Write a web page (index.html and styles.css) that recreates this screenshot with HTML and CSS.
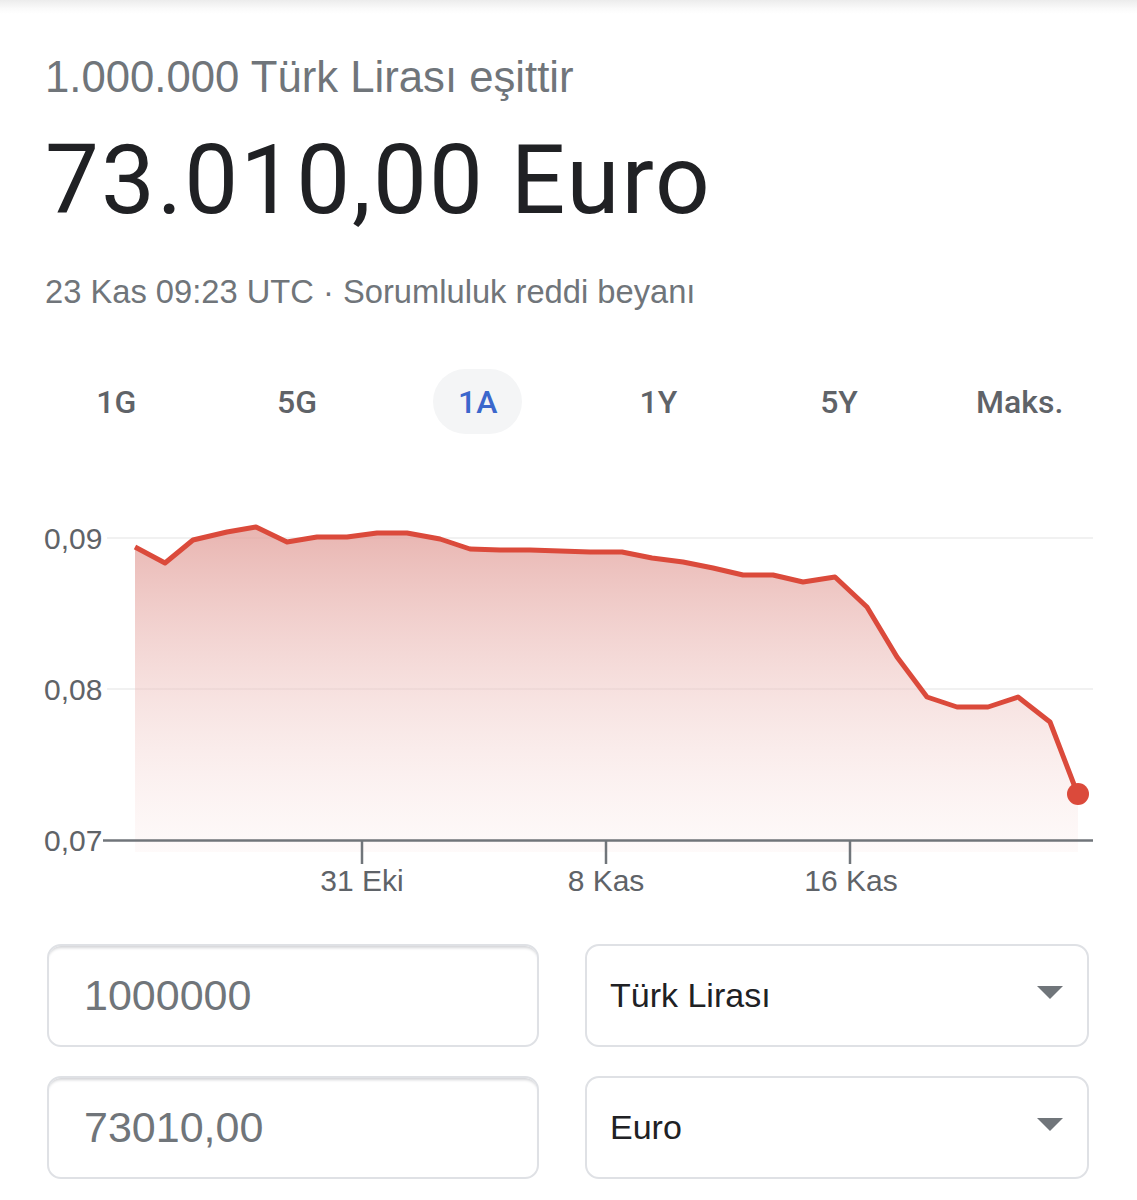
FILE: index.html
```html
<!DOCTYPE html>
<html lang="tr">
<head>
<meta charset="utf-8">
<title>Döviz çevirici</title>
<link rel="stylesheet" href="styles.css">
</head>
<body>
<div class="topbar"></div>
<main class="card">
  <div class="head">
    <div class="subtitle">1.000.000 Türk Lirası eşittir</div>
    <div class="result">73.010,00 Euro</div>
    <div class="meta">23 Kas 09:23 UTC · Sorumluluk reddi beyanı</div>
  </div>
  <nav class="tabs">
    <div class="tab"><span>1G</span></div>
    <div class="tab"><span>5G</span></div>
    <div class="tab"><span class="active">1A</span></div>
    <div class="tab"><span>1Y</span></div>
    <div class="tab"><span>5Y</span></div>
    <div class="tab"><span>Maks.</span></div>
  </nav>
  <div class="chart">
    <svg width="1137" height="420" viewBox="0 490 1137 420" xmlns="http://www.w3.org/2000/svg">
      <defs>
        <linearGradient id="fill" x1="0" y1="0" x2="0" y2="1">
          <stop offset="0" stop-color="#e3a29d" stop-opacity="0.8"/>
          <stop offset="1" stop-color="#f7dcda" stop-opacity="0.15"/>
        </linearGradient>
      </defs>
      <line x1="107" y1="538" x2="1093" y2="538" stroke="#f1f1f1" stroke-width="2"/>
      <line x1="107" y1="689" x2="1093" y2="689" stroke="#f1f1f1" stroke-width="2"/>
      <path d="M135,547 L165,563 L193,540 L227,532 L256,527 L287,542 L317,537 L347,537 L377,533 L407,533 L440,539 L470,549 L500,550 L530,550 L560,551 L590,552 L622,552 L652,558 L683,562 L713,568 L743,575 L773,575 L803,582 L835,577 L867,607 L897,657 L927,697 L957,707 L988,707 L1018,697 L1050,722 L1078,795 L1078,852 L135,852 Z" fill="url(#fill)"/>
      <line x1="103" y1="840.5" x2="1093" y2="840.5" stroke="#70757a" stroke-width="2.5"/>
      <line x1="362" y1="840" x2="362" y2="864" stroke="#70757a" stroke-width="2.5"/>
      <line x1="606" y1="840" x2="606" y2="864" stroke="#70757a" stroke-width="2.5"/>
      <line x1="850" y1="840" x2="850" y2="864" stroke="#70757a" stroke-width="2.5"/>
      <polyline points="135,547 165,563 193,540 227,532 256,527 287,542 317,537 347,537 377,533 407,533 440,539 470,549 500,550 530,550 560,551 590,552 622,552 652,558 683,562 713,568 743,575 773,575 803,582 835,577 867,607 897,657 927,697 957,707 988,707 1018,697 1050,722 1078,795" fill="none" stroke="#db4a3b" stroke-width="5" stroke-linejoin="round"/>
      <circle cx="1078" cy="794" r="11" fill="#db4a3b"/>
      <g class="axis-text">
        <text x="44" y="549">0,09</text>
        <text x="44" y="700">0,08</text>
        <text x="44" y="851">0,07</text>
        <text x="362" y="891" text-anchor="middle">31 Eki</text>
        <text x="606" y="891" text-anchor="middle">8 Kas</text>
        <text x="851" y="891" text-anchor="middle">16 Kas</text>
      </g>
    </svg>
  </div>
  <div class="converter">
    <div class="field amount">1000000</div>
    <div class="field select"><span>Türk Lirası</span><span class="caret"></span></div>
    <div class="field amount">73010,00</div>
    <div class="field select"><span>Euro</span><span class="caret"></span></div>
  </div>
</main>
</body>
</html>
```

FILE: styles.css
```css
* { box-sizing: border-box; }
html, body { margin: 0; padding: 0; background: #fff; }
body {
  font-family: "Liberation Sans", Arial, Helvetica, sans-serif;
  color: #202124;
  width: 1137px;
}
.topbar {
  height: 14px;
  background: linear-gradient(#ececec, #fafafa 60%, #fff);
}
.head { padding: 0 0 0 45px; }
.subtitle {
  margin-top: 37px;
  font-size: 43.7px;
  line-height: 52px;
  color: #70757a;
}
.result {
  margin-top: 22px;
  font-family: Roboto, "Open Sans", sans-serif;
  font-size: 96px;
  line-height: 110px;
  color: #202124;
  letter-spacing: 2px;
}
.meta {
  margin-top: 37px;
  font-size: 32.7px;
  line-height: 40px;
  color: #70757a;
}
.tabs {
  display: grid;
  grid-template-columns: repeat(6, 1fr);
  padding: 0 27px 0 26px;
  margin-top: 57px;
  height: 65px;
}
.tab {
  display: flex;
  align-items: center;
  justify-content: center;
}
.tab span {
  font-family: Roboto, "Liberation Sans", sans-serif;
  font-size: 32px;
  font-weight: 500;
  color: #5f6368;
  height: 65px;
  display: flex;
  align-items: center;
  padding: 0 25px;
  border-radius: 33px;
}
.tab span.active {
  color: #3b67cc;
  background: #f4f5f6;
}
.chart { margin-top: 56px; height: 420px; }
.chart svg { display: block; }
.axis-text text {
  font-family: "Liberation Sans", Arial, sans-serif;
  font-size: 30px;
  fill: #5f6368;
}
.converter {
  margin-top: 34px;
  display: grid;
  grid-template-columns: 492px 504px;
  column-gap: 46px;
  row-gap: 29px;
  padding-left: 47px;
}
.field {
  height: 103px;
  border: 2px solid #dfe1e5;
  border-radius: 14px;
  display: flex;
  align-items: center;
}
.amount {
  padding-left: 35px;
  font-size: 43px;
  color: #70757a;
  box-shadow: inset 0 4px 3px -2px #d4d5d8;
}
.select {
  padding: 0 24px 0 23px;
  justify-content: space-between;
  font-size: 34px;
  color: #202124;
}
.caret {
  width: 0; height: 0;
  border-left: 13px solid transparent;
  border-right: 13px solid transparent;
  border-top: 13px solid #70757a;
  margin-top: -6px;
}
```
